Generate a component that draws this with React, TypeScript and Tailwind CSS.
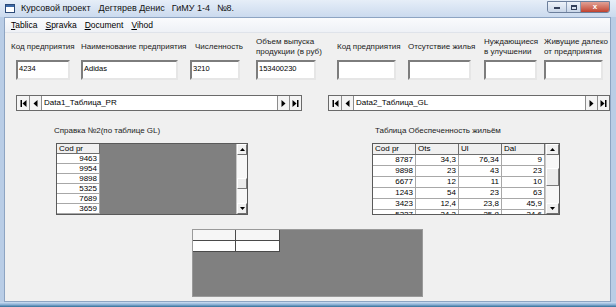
import React from "react";

const fields = [
  { wrap: "w-[70px]", label: "", input: "ml-[5px] w-[54px]", lines: ["Код предприятия"], value: "4234" },
  { wrap: "w-[109px]", label: "", input: "w-[97px]", lines: ["Наименование предприятия"], value: "Adidas" },
  { wrap: "w-[66px]", label: "ml-[5px]", input: "w-[50px]", lines: ["Численность"], value: "3210" },
  { wrap: "w-[81px]", label: "", input: "w-[60px]", lines: ["Объем выпуска", "продукции (в руб)"], value: "153400230" },
  { wrap: "w-[71px]", label: "", input: "w-[59px]", lines: ["Код предприятия"], value: "" },
  { wrap: "w-[76px]", label: "", input: "w-[63px]", lines: ["Отсутствие жилья"], value: "" },
  { wrap: "w-[60px]", label: "", input: "w-[53px]", lines: ["Нуждающиеся", "в улучшении"], value: "" },
  { wrap: "w-[62px]", label: "", input: "w-[59px]", lines: ["Живущие далеко", "от предприятия"], value: "" },
];

const leftRows = ["9463", "9954", "9898", "5325", "7689", "3659"];
const rightRows = [
  ["8787", "34,3", "76,34", "9"],
  ["9898", "23", "43", "23"],
  ["6677", "12", "11", "10"],
  ["1243", "54", "23", "63"],
  ["3423", "12,4", "23,8", "45,9"],
  ["5327", "34,3", "25,8", "34,6"],
];

function NavIcon({ kind }: { kind: "first" | "prev" | "next" | "last" }) {
  return (
    <svg width="7" height="7" viewBox="0 0 7 7">
      {kind === "first" && (
        <>
          <rect x="0.5" y="0" width="1.5" height="7" fill="#000" />
          <polygon points="6.5,0 2.5,3.5 6.5,7" fill="#000" />
        </>
      )}
      {kind === "prev" && <polygon points="5.5,0 1.5,3.5 5.5,7" fill="#000" />}
      {kind === "next" && <polygon points="1.5,0 5.5,3.5 1.5,7" fill="#000" />}
      {kind === "last" && (
        <>
          <polygon points="0.5,0 4.5,3.5 0.5,7" fill="#000" />
          <rect x="5" y="0" width="1.5" height="7" fill="#000" />
        </>
      )}
    </svg>
  );
}

function NavBar({ label, className }: { label: string; className: string }) {
  return (
    <div className={`flex h-[16px] bg-white border border-[#6a6a6a] ${className}`}>
      <div className="w-[13px] flex items-center justify-center bg-[#f4f4f4] border-r border-[#8c8c8c]">
        <NavIcon kind="first" />
      </div>
      <div className="w-[12px] flex items-center justify-center bg-[#f4f4f4] border-r border-[#8c8c8c]">
        <NavIcon kind="prev" />
      </div>
      <div className="flex-1 flex items-center pl-[2px] text-[8px]">{label}</div>
      <div className="w-[12px] flex items-center justify-center bg-[#f4f4f4] border-l border-[#8c8c8c]">
        <NavIcon kind="next" />
      </div>
      <div className="w-[12px] flex items-center justify-center bg-[#f4f4f4] border-l border-[#8c8c8c]">
        <NavIcon kind="last" />
      </div>
    </div>
  );
}

function ScrollBtn({ up }: { up: boolean }) {
  return (
    <div className="h-[11px] flex items-center justify-center bg-[#f0f0f0] border border-t-white border-l-white border-b-[#707070] border-r-[#707070]">
      <svg width="5" height="3" viewBox="0 0 5 3">
        {up ? <polygon points="0,3 2.5,0 5,3" fill="#000" /> : <polygon points="0,0 2.5,3 5,0" fill="#000" />}
      </svg>
    </div>
  );
}

function ScrollBar({ width, thumb }: { width: string; thumb: string }) {
  return (
    <div className={`${width} flex flex-col bg-[#f7f7f7] border-l border-[#c8c8c8]`}>
      <ScrollBtn up />
      <div className="flex-1 flex flex-col">
        <div className={`${thumb} bg-[#ececec] border border-t-white border-l-white border-b-[#7a7a7a] border-r-[#7a7a7a]`} />
      </div>
      <ScrollBtn up={false} />
    </div>
  );
}

const head = "h-[11px] bg-[#f0f0f0] border-r border-b border-[#6e6e6e] px-[2px] flex items-center text-[8px] leading-none";
const cell = "h-[11px] bg-white border-r border-b border-[#a8a8a8] px-[2px] flex items-center justify-end text-[8px] leading-none";

export default function App() {
  return (
    <div className="w-[616px] h-[307px] overflow-hidden flex flex-col bg-[#b9cde6] text-black font-['Liberation_Sans',Arial,sans-serif]">
      {/* TITLE BAR */}
      <div className="h-[17px] flex items-center bg-gradient-to-b from-[#e6eef8] to-[#cbdaee] pl-[5px] pr-[6px]">
        <svg width="10" height="9" viewBox="0 0 10 9" className="shrink-0">
          <rect x="0.5" y="0.5" width="9" height="8" fill="#fff" stroke="#2c4a78" />
          <rect x="1" y="1" width="8" height="2" fill="#3d6aa8" />
        </svg>
        <div className="ml-[6px] text-[9px] leading-none text-[#111] flex">
          <span>Курсовой проект</span>
          <span className="ml-[8px]">Дегтярев Денис</span>
          <span className="ml-[7px]">ГиМУ 1-4</span>
          <span className="ml-[7px]">№8.</span>
        </div>
        <div className="ml-auto self-start mt-[1px] flex h-[12px] rounded-b-[3px] overflow-hidden border border-[#6c7f9c]">
          <div className="w-[19px] flex items-end justify-center pb-[3px] bg-gradient-to-b from-[#eef3fa] to-[#c9d6e8] border-r border-[#8a9bb5]">
            <div className="w-[6px] h-[2px] bg-[#33405a]" />
          </div>
          <div className="w-[14px] flex items-center justify-center bg-gradient-to-b from-[#eef3fa] to-[#c9d6e8] border-r border-[#8a9bb5]">
            <div className="w-[6px] h-[5px] border border-t-2 border-[#33405a]" />
          </div>
          <div className="w-[28px] flex items-center justify-center bg-gradient-to-b from-[#e0a196] to-[#c0412f] text-white text-[8px] font-bold leading-none">
            x
          </div>
        </div>
      </div>

      <div className="flex-1 min-h-0 flex flex-col ml-[4px] mr-[5px] border border-[#8da4c2]">
        {/* MENU */}
        <div className="h-[15px] flex items-center gap-[8px] pl-[6px] text-[8.5px] leading-none bg-gradient-to-b from-[#fafbfd] to-[#eef1f6] border-b border-[#dfe3ea]">
          <span><u>T</u>ablica</span>
          <span><u>S</u>pravka</span>
          <span><u>D</u>ocument</span>
          <span><u>V</u>ihod</span>
        </div>

        {/* CLIENT */}
        <div className="flex-1 min-h-0 bg-[#f0f0f0] flex flex-col overflow-hidden">
          {/* FIELDS */}
          <div className="flex pl-[6px] mt-[3px]">
            {fields.map((f, i) => (
              <div key={i} className={`${f.wrap} shrink-0 flex flex-col`}>
                <div className={`${f.label} h-[22px] flex flex-col justify-center text-[8px] leading-[10px] text-[#222] whitespace-nowrap`}>
                  {f.lines.map((l) => (
                    <span key={l}>{l}</span>
                  ))}
                </div>
                <div className={`${f.input} mt-[2px] h-[20px] bg-white border-2 border-t-[#7d7d7d] border-l-[#7d7d7d] border-b-[#e6e6e6] border-r-[#e6e6e6] pl-[1px] pt-[2px] text-[7.5px] leading-[9px]`}>
                  {f.value}
                </div>
              </div>
            ))}
          </div>

          {/* NAVIGATORS */}
          <div className="flex mt-[15px]">
            <NavBar label="Data1_Таблица_PR" className="ml-[11px] w-[286px]" />
            <NavBar label="Data2_Таблица_GL" className="ml-[26px] flex-1" />
          </div>

          {/* GRIDS */}
          <div className="flex mt-[15px]">
            <div className="ml-[49px] w-[194px] flex flex-col">
              <div className="h-[9px] text-[8px] leading-[9px] text-[#222]">Справка №2(по таблице GL)</div>
              <div className="ml-[2px] mt-[8px] w-[192px] h-[72px] flex border border-[#5a5a5a] overflow-hidden">
                <div className="flex-1 flex bg-[#808080]">
                  <div className="w-[43px] flex flex-col">
                    <div className={head}>Cod pr</div>
                    {leftRows.map((r) => (
                      <div key={r} className={cell}>{r}</div>
                    ))}
                  </div>
                </div>
                <ScrollBar width="w-[11px]" thumb="mt-[23px] h-[11px]" />
              </div>
            </div>

            <div className="ml-[124px] w-[190px] flex flex-col">
              <div className="ml-[3px] h-[9px] text-[8px] leading-[9px] text-[#222]">Таблица Обеспеченность жильём</div>
              <div className="mt-[8px] w-[188px] h-[72px] flex border border-[#5a5a5a] overflow-hidden">
                <div className="flex-1 flex flex-col bg-white">
                  <div className="flex">
                    {["Cod pr", "Ots", "Ul", "Dal"].map((h) => (
                      <div key={h} className={`${head} w-[43px]`}>{h}</div>
                    ))}
                  </div>
                  {rightRows.map((r) => (
                    <div key={r[0]} className="flex">
                      {r.map((v, j) => (
                        <div key={j} className={`${cell} w-[43px]`}>{v}</div>
                      ))}
                    </div>
                  ))}
                </div>
                <ScrollBar width="w-[14px]" thumb="mt-[13px] h-[18px]" />
              </div>
            </div>
          </div>

          {/* BOTTOM GRID */}
          <div className="ml-[187px] mt-[14px] w-[231px] h-[68px] bg-[#808080] border border-[#9a9a9a]">
            <div className="flex">
              <div className="w-[43px] h-[11px] bg-[#f6f6f6] border-r border-b border-[#4a4a4a]" />
              <div className="w-[44px] h-[11px] bg-[#f6f6f6] border-r border-b border-[#4a4a4a]" />
            </div>
            <div className="flex">
              <div className="w-[43px] h-[11px] bg-white border-r border-b border-[#4a4a4a]" />
              <div className="w-[44px] h-[11px] bg-white border-r border-b border-[#4a4a4a]" />
            </div>
          </div>
        </div>
      </div>

      {/* BOTTOM FRAME */}
      <div className="h-[5px] bg-gradient-to-b from-[#cfe0f3] via-[#8eb2d6] to-[#2f6f98]" />
    </div>
  );
}
